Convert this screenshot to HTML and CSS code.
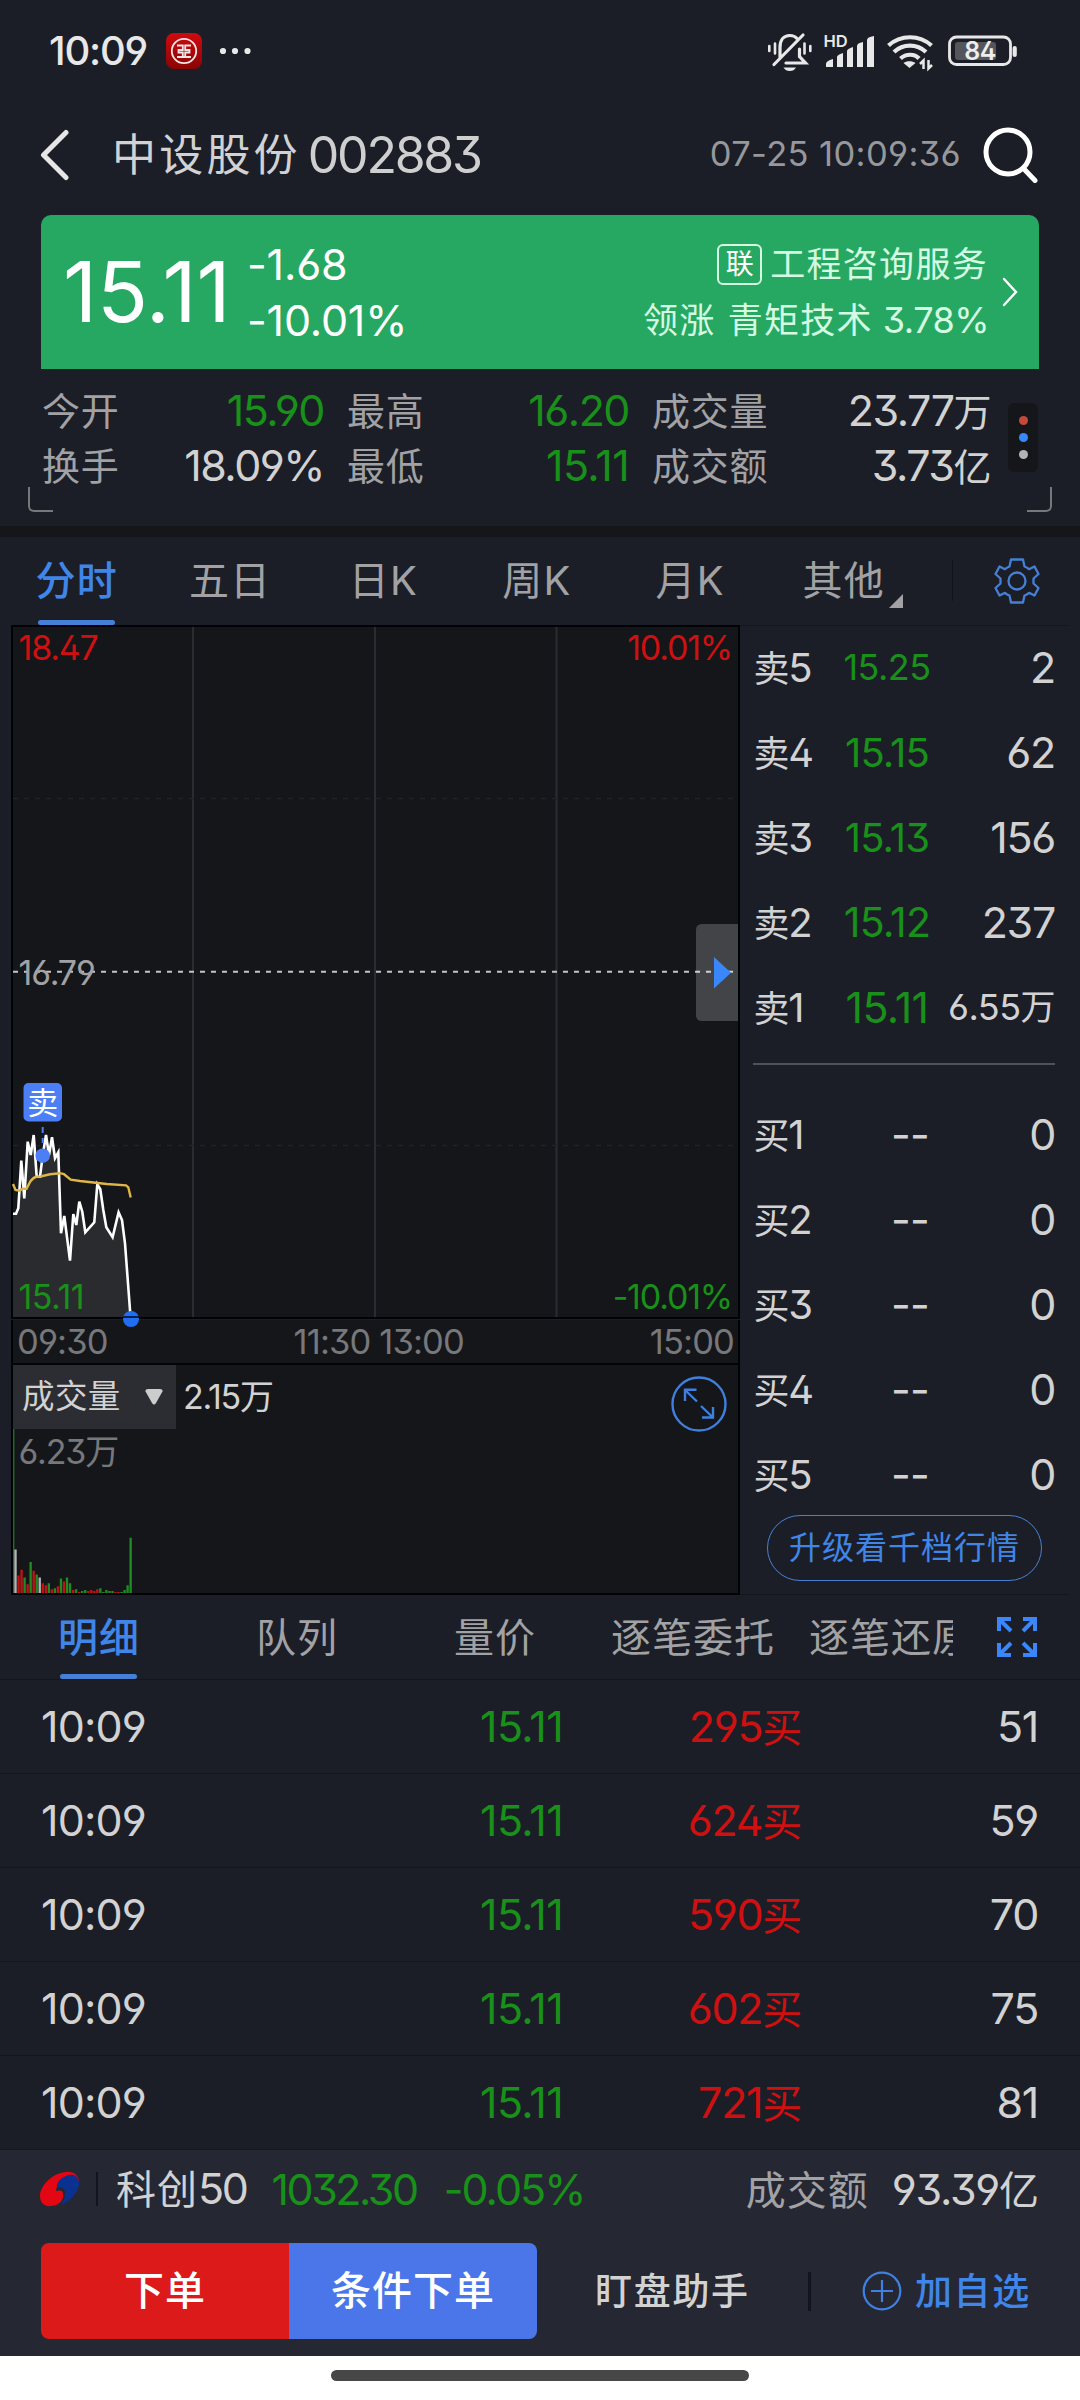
FILE: index.html
```html
<!DOCTYPE html>
<html lang="zh-CN">
<head>
<meta charset="utf-8">
<title>中设股份 002883</title>
<link rel="stylesheet" href="styles.css">
</head>
<body>
<div class="screen">

<header class="status">
  <span class="clock">10:09</span>
  <svg class="bank" viewBox="0 0 36 36"><defs><linearGradient id="bk" x1="0" y1="0" x2="0" y2="1"><stop offset="0" stop-color="#cf0a10"/><stop offset="1" stop-color="#8a0404"/></linearGradient></defs><rect width="36" height="36" rx="8" fill="url(#bk)"/><g fill="none" stroke="#f3e6e6" stroke-width="1.800"><circle cx="18" cy="18" r="12.200"/><path d="M11 12.500h5.800v4.500H12.500v2.500h4.300v4.500H11M25 12.500h-5.800v4.500h4.300v2.500h-4.300v4.500H25M15 24h6"/></g></svg>
  <svg class="dots" viewBox="0 0 32 8" fill="#e8e8e8"><circle cx="4" cy="4" r="3.100"/><circle cx="16" cy="4" r="3.100"/><circle cx="28.500" cy="4" r="3.100"/></svg>
  <svg class="sysicons" viewBox="765 30 255 44" fill="none" stroke="#e8e8e8" stroke-width="3.200">
    <g stroke-linecap="round"><path d="M780 57v-9.500c0-8 4-12 9.800-12 3 0 5.500 1 7.200 3M799.500 49v7.500l6 6.500H786M774 64.500L803 35"/><path d="M775 43.500v10M804.500 43.500v10" stroke-width="2.600"/><path d="M769.300 46v5M810.300 46v5" stroke-width="2.600"/></g>
    <path d="M783.500 67.500h12.500q-2 3.500-6.200 3.500t-6.300-3.500z" fill="#e8e8e8" stroke="none"/>
    <text class="hd" x="823.500" y="47.300" fill="#e8e8e8" stroke="none">HD</text>
    <path d="M826 67v-3q0-3 7-5v8zM837 67V57q0-2 6-4v14zM847 67V51q0-2 6-4v20zM857 67V46q0-3 6-4v25zM867 67V40q0-3 7-4v31z" fill="#e8e8e8" stroke="none"/>
    <path d="M888.500 45.500c12-11 31-11 43 0M894 52c9-8.500 23-8.500 32 0M900.500 58.500c5.500-5 14-5 18.500 0" stroke-width="4.200"/>
    <path d="M903.500 63c3-2.500 9-2.500 12 0l-6 5z" fill="#e8e8e8" stroke="none"/>
    <path d="M923.500 69v-8.500l-3.500 3.500M928.500 60v8.500l3.500-3.500" stroke-width="2.500"/>
    <rect x="949.500" y="37" width="61" height="27.500" rx="7" stroke-width="2.800"/>
    <path d="M1014.700 48v7" stroke-width="4.200" stroke-linecap="round"/>
    <rect x="955" y="42" width="41" height="18" rx="3" fill="#55565c" stroke="none"/>
    <text class="batt" x="980" y="60" text-anchor="middle" fill="#eee" stroke="none">84</text>
  </svg>
</header>

<nav class="titlebar">
  <svg class="back" viewBox="0 0 30 52" fill="none" stroke="#e6e6e6" stroke-width="5" stroke-linecap="round" stroke-linejoin="round"><path d="M26 3.500L3.500 26 26 48.500"/></svg>
  <h1><span class="name">中设股份</span><span class="code">002883</span></h1>
  <time>07-25 10:09:36</time>
  <svg class="search" viewBox="0 0 56 56" fill="none" stroke="#fff" stroke-width="5" stroke-linecap="round"><circle cx="25" cy="25" r="22"/><path d="M41 42l11 11.500"/></svg>
</nav>

<section class="quote">
  <strong>15.11</strong>
  <div class="change"><span>-1.68</span><span>-10.01%</span></div>
  <div class="sector">
    <div><b>联</b><span>工程咨询服务</span></div>
    <div><span>领涨</span><span class="lead">青矩技术</span><span class="num">3.78%</span></div>
  </div>
  <svg class="go" viewBox="0 0 16 30" fill="none" stroke="#fff" stroke-width="2.400" stroke-linecap="round"><path d="M2 2l12 13L2 28"/></svg>
</section>

<section class="stats">
  <dl>
    <dt>今开</dt><dd class="green">15.90</dd><dt>最高</dt><dd class="green">16.20</dd><dt>成交量</dt><dd>23.77<i>万</i></dd>
    <dt>换手</dt><dd>18.09%</dd><dt>最低</dt><dd class="green wide">15.11</dd><dt>成交额</dt><dd>3.73<i>亿</i></dd>
  </dl>
  <div class="more"><span></span><span></span><span></span></div>
  <span class="corner left"></span><span class="corner right"></span>
</section>

<nav class="periods">
  <span class="on">分时</span><span>五日</span><span>日K</span><span>周K</span><span>月K</span><span class="other">其他</span>
  <div class="settings"><svg viewBox="-24 -24 48 48" fill="none" stroke="#4580d6" stroke-width="2.300" stroke-linejoin="round"><circle r="8.500"/><path d="M-6-21.500H6L7.500-14.500Q10-13.500 12-11.800L17.500-14.500 21.500-7 16.500-2.500V2.500L21.500 7 17.500 14.500 12 11.800Q10 13.500 7.500 14.500L6 21.500H-6L-7.500 14.500Q-10 13.500-12 11.800L-17.500 14.500-21.500 7-16.500 2.500V-2.500L-21.500-7-17.500-14.500-12-11.800Q-10-13.500-7.500-14.500Z"/></svg></div>
</nav>

<main class="market">
  <div class="charts">
    <svg class="price" viewBox="11 625 729 695">
      <rect x="12" y="626" width="727" height="692" fill="#15161a" stroke="#020308" stroke-width="2"/>
      <path d="M193 627v690M375 627v690M556.500 627v690" stroke="#2b2c33" stroke-width="2"/>
      <path d="M13 798.500h725M13 1145.500h725" stroke="#212227" stroke-width="1.500" stroke-dasharray="5 6"/>
      <path d="M13 971.700h725" stroke="#c4c4c6" stroke-width="2" stroke-dasharray="5 6"/>
      <path d="M13 1213.700h3l2.300-5.400 3-47.600 3 37.600 3.400-56.600 3 13.300 3-20 3 41.700h3.300l2.700-21 3.300-20.700 3 20 3-17.700 3 21 3.300-6 2.700 81 3.300-17.300 5.700 44.700 3.300-46.700 3 11 3-23.300 3 10 3 20.600 9-10 3-38 3 5 3 20.700 3 17.300 6.300 10 6-25 3.400 7.700 3 23.300L130.300 1317H13z" fill="#2a2b2f"/>
      <path d="M13 1213.700h3l2.300-5.400 3-47.600 3 37.600 3.400-56.600 3 13.300 3-20 3 41.700h3.300l2.700-21 3.300-20.700 3 20 3-17.700 3 21 3.300-6 2.700 81 3.300-17.300 5.700 44.700 3.300-46.700 3 11 3-23.300 3 10 3 20.600 9-10 3-38 3 5 3 20.700 3 17.300 6.300 10 6-25 3.400 7.700 3 23.300L130.300 1314" fill="none" stroke="#fff" stroke-width="2.600"/>
      <path d="M13 1184l2.500 6 4 .7 3-2h4l4-7.500q3-4 6-4.500l4-.2 9.500-2.200 10-1.100 4 1 6.700 5.400 9.300 1.400 26.700 3 19.300 1.300 2.300 2 2.400 10.300" fill="none" stroke="#deb648" stroke-width="2.400"/>
      <path d="M42.700 1127v16" stroke="#4c82f0" stroke-width="2" stroke-dasharray="6 5"/>
      <circle cx="42.700" cy="1155.700" r="7.300" fill="#4c7ef5"/>
      <rect x="23.500" y="1083" width="38.500" height="38.500" rx="5" fill="#4c7ef5"/>
      <text class="mark" x="42.700" y="1113.500">卖</text>
      <text class="tick red" x="18.500" y="660">18.47</text>
      <text class="tick red end" x="732" y="660">10.01%</text>
      <text class="tick gray" x="18.500" y="984.500">16.79</text>
      <text class="tick green wide" x="18.500" y="1308.500">15.11</text>
      <text class="tick green end" x="732" y="1308.500">-10.01%</text>
      <path d="M738 924h-36q-6 0-6 6v85q0 6 6 6h36z" fill="#fff" fill-opacity=".2"/>
      <path d="M714 957v31.500l17-15.700z" fill="#3a86fb"/>
    </svg>
    <div class="axis"><span>09:30</span><span class="mid">11:30 13:00</span><span>15:00</span><i class="last"></i></div>
    <div class="volume">
      <div class="volhead"><div class="select">成交量<svg viewBox="0 0 18 16" fill="#ccc"><path d="M3 0h12q3 0 2.500 2.500L11 14q-2 3-4 0L.5 2.500Q0 0 3 0z"/></svg></div><span>2.15<i>万</i></span>
        <svg class="expand" viewBox="-28 -28 56 56" fill="none" stroke="#3f7fdd" stroke-width="2.400"><circle r="26.500"/><path d="M-2-2.500L-14-14M-2.500-14.200H-14V-3M2 2L14 13.500M14 3V13.500H3"/></svg></div>
      <svg class="bars" viewBox="13 1429 725 164">
        <path d="M13.700 1429v164" stroke="#1c721e" stroke-width="1.400"/>
        <g transform="translate(15.500 1593) scale(3.030 -.968)" stroke-width=".78">
          <path stroke="#b4b4b4" d="M0 0v45M8 0v16"/>
          <path stroke="#c01414" d="M1 0v18M2 0v24M4 0v9M6 0v23M9 0v10M10 0v8M12 0v4M14 0v7M16 0v12M19 0v3M21 0v1M24 0v2M25 0v3M26 0v2M27 0v4M33 0v1M34 0v1"/>
          <path stroke="#1f8c22" d="M3 0v16M5 0v32M7 0v19M11 0v10M13 0v5M15 0v15M17 0v16M18 0v10M20 0v4M22 0v2M23 0v3M28 0v5M29 0v1M30 0v3M31 0v2M32 0v2M35 0v1M36 0v3M37 0v8M38 0v57"/>
        </g>
        <text class="tick dim" x="18.500" y="1464">6.23<tspan class="wan">万</tspan></text>
      </svg>
    </div>
  </div>
  <aside class="book">
    <div class="side">
      <p><span>卖<i>5</i></span><em class="s1">15.25</em><b>2</b></p>
      <p><span>卖<i>4</i></span><em class="s2">15.15</em><b>62</b></p>
      <p><span>卖<i>3</i></span><em class="s2">15.13</em><b>156</b></p>
      <p><span>卖<i>2</i></span><em class="s3">15.12</em><b>237</b></p>
      <p><span>卖<i>1</i></span><em class="wide">15.11</em><b class="small">6.55<i>万</i></b></p>
    </div>
    <div class="side buy">
      <p><span>买<i>1</i></span><em>--</em><b>0</b></p>
      <p><span>买<i>2</i></span><em>--</em><b>0</b></p>
      <p><span>买<i>3</i></span><em>--</em><b>0</b></p>
      <p><span>买<i>4</i></span><em>--</em><b>0</b></p>
      <p><span>买<i>5</i></span><em>--</em><b>0</b></p>
    </div>
    <button class="upgrade">升级看千档行情</button>
  </aside>
</main>

<nav class="detailtabs">
  <div class="scroller"><span class="on">明细</span><span>队列</span><span>量价</span><span>逐笔委托</span><span>逐笔还原</span></div>
  <svg viewBox="0 0 40 40" fill="none" stroke="#3a86fb" stroke-width="4"><path d="M2 14V2h12M2 2l12 12M26 2h12v12M38 2L26 14M2 26v12h12M2 38l12-12M38 26v12H26M38 38L26 26"/></svg>
</nav>

<section class="trades">
  <p><time>10:09</time><span class="green wide">15.11</span><span class="red">295<i>买</i></span><b>51</b></p>
  <p><time>10:09</time><span class="green wide">15.11</span><span class="red">624<i>买</i></span><b>59</b></p>
  <p><time>10:09</time><span class="green wide">15.11</span><span class="red">590<i>买</i></span><b>70</b></p>
  <p><time>10:09</time><span class="green wide">15.11</span><span class="red">602<i>买</i></span><b>75</b></p>
  <p><time>10:09</time><span class="green wide">15.11</span><span class="red">721<i>买</i></span><b>81</b></p>
</section>

<footer class="bottom">
  <div class="index">
    <svg viewBox="0 0 40 36"><path d="M39 11C39 4 33 0 26 1 12 2 0 15 0 25c0 7 5 11 11 10 10-1 13-7 12-13-1-3-3-3-7-2 1-9 10-15 23-9z" fill="#e30613"/><path d="M39 11C38 4 32 2 26 5c-7 3-10 8-9 12 4-2 8 0 8 5 0 5-1 8-5 12C30 31 40 20 39 11z" fill="#0a3190"/></svg>
    <span class="iname"><i>科创</i>50</span><span class="green ival">1032.30</span><span class="green ichg">-0.05%</span>
    <span class="turn"><i>成交额</i></span><span class="tval">93.39<i>亿</i></span>
  </div>
  <div class="actions">
    <button class="order">下单</button><button class="cond">条件下单</button>
    <span class="helper">盯盘助手</span>
    <span class="add"><svg viewBox="-20 -20 40 40" fill="none" stroke="#4080e0" stroke-width="2.200"><circle r="18.300"/><path d="M-11 0H11M0-11V11"/></svg>加自选</span>
  </div>
</footer>
<div class="gesture"><span></span></div>

</div>
</body>
</html>
```
FILE: styles.css
```css
* { box-sizing: border-box; margin: 0; padding: 0; }
body { background: #1b1e27; }
i, em { font-style: normal; }
b, strong, h1 { font-weight: inherit; }
svg { display: block; flex: none; }
button { border: 0; background: none; color: inherit; font: inherit; letter-spacing: inherit; }

.screen {
  width: 1080px;
  height: 2400px;
  overflow: hidden;
  display: flex;
  flex-direction: column;
  background: #1b1e27;
  color: #d2d2d3;
  font-family: Inter, "Noto Sans CJK SC", sans-serif;
  font-size: 43px;
  font-weight: 400;
  letter-spacing: -.03em;
  line-height: 1;
  white-space: nowrap;
  font-feature-settings: "ss01", "cv03", "cv04", "cv09";
}
.green { color: #189019; fill: #189019; }
.red { color: #cf1010; fill: #cf1010; }

.status { height: 102px; display: flex; align-items: center; padding: 0 60px 0 49px; color: #e8e8e8; }
.clock { width: 117px; font-size: 40px; font-weight: 500; letter-spacing: -.03em; }
.bank { width: 36px; height: 36px; }
.dots { width: 32px; height: 8px; margin-left: 17px; }
.sysicons { width: 255px; height: 44px; margin-left: auto; margin-top: 2px; }
.hd { font-size: 16.5px; font-weight: 600; letter-spacing: 0; }
.batt { font-size: 25px; font-weight: 600; letter-spacing: -.02em; }

.titlebar { height: 113px; display: flex; align-items: center; padding: 0 41px 8px 40px; }
.back { width: 30px; height: 52px; }
h1 { display: flex; align-items: center; margin-left: 42px; font-size: 50px; letter-spacing: -.045em; }
.name { font-size: 44px; letter-spacing: 3.2px; margin-right: 7px; }
.code { color: #cfcfd0; }
.titlebar time { margin-left: auto; font-size: 34.5px; color: #97989b; letter-spacing: .011em; }
.search { width: 56px; height: 56px; margin-left: 22px; }

.quote {
  height: 154px;
  margin: 0 41px;
  display: flex;
  align-items: center;
  border-radius: 10px 10px 0 0;
  background: #27a862;
  color: #fff;
}
.quote strong { width: 206px; padding-left: 22px; font-size: 84px; letter-spacing: -.002em; }
.change { display: flex; flex-direction: column; gap: 13px; letter-spacing: -.004em; }
.sector { margin-left: auto; display: flex; flex-direction: column; gap: 14px; align-items: flex-end; color: #d3fce2; font-size: 35px; letter-spacing: 1.3px; }
.sector div { display: flex; align-items: center; height: 42px; }
.sector b { width: 45px; height: 41px; margin-right: 8px; border: 2px solid #d3fce2; border-radius: 6px; font-size: 28px; line-height: 37px; text-align: center; letter-spacing: 0; color: #fff; }
.lead { margin: 0 10px 0 12px; }
.sector .num { font-size: 36px; letter-spacing: -.015em; margin-right: -1px; }
.go { width: 16px; height: 30px; margin: 0 21px 0 14px; }

.stats { position: relative; height: 157px; padding: 14px 42px 0 42px; display: flex; }
.stats dl { width: 948px; display: grid; grid-template-columns: 75px 207px 98px 207px 138px 1fr; grid-auto-rows: 55px; align-items: center; }
.stats dt { font-size: 38px; letter-spacing: .8px; color: #a2a2a5; }
.stats dt:nth-of-type(3n+2), .stats dt:nth-of-type(3n) { padding-left: 23px; }
.stats dd { text-align: right; letter-spacing: -.035em; }
.stats dd i { font-size: 38px; }
.wide, .stats dd.wide { letter-spacing: -.015em; }
.more { width: 30px; height: 69px; margin: 20px 0 0 18px; padding: 13px 0; display: flex; flex-direction: column; justify-content: space-between; align-items: center; border-radius: 6px; background: #15161a; flex: none; }
.more span { width: 9px; height: 9px; border-radius: 50%; background: #b4b4b6; }
.more span:nth-child(1) { background: #c5493a; }
.more span:nth-child(2) { background: #3a86fb; }
.corner { position: absolute; top: 118px; width: 25px; height: 25px; border-bottom: 2.5px solid #77787b; }
.left { left: 28px; border-left: 2.5px solid #77787b; border-bottom-left-radius: 6px; }
.right { right: 28px; border-right: 2.5px solid #77787b; border-bottom-right-radius: 6px; }

.periods { height: 99px; border-top: 11px solid #15161a; display: flex; color: #a2a2a5; font-size: 40px; letter-spacing: 1.2px; }
.periods > span { width: 153.4px; height: 88px; text-align: center; line-height: 87px; }
.periods .on, .detailtabs .on { position: relative; color: #4085e8; font-weight: 500; }
.on::after { content: ""; position: absolute; left: 50%; bottom: 0; width: 77px; height: 5px; margin-left: -39px; border-radius: 3px; background: #4580d6; }
.other { position: relative; }
.other::after { content: ""; position: absolute; right: 17px; bottom: 17px; border: 7px solid; border-color: transparent #a2a2a5 #a2a2a5 transparent; }
.settings { width: 127px; height: 41px; margin: 23px 0 0 32px; border-left: 1px solid #111319; padding-left: 40px; display: flex; align-items: center; }
.settings svg { width: 48px; height: 48px; }

.market { height: 970px; display: flex; }
.charts { width: 729px; margin-left: 11px; flex: none; }
.price { width: 729px; height: 695px; position: relative; z-index: 0; }
.tick { font-size: 34px; letter-spacing: -.035em; }
.tick.wide { letter-spacing: -.015em; }
.end { text-anchor: end; }
.gray { fill: #a2a2a5; }
.dim { fill: #77787b; }
.wan { font-size: 34px; }
.mark { font-size: 31px; fill: #fff; text-anchor: middle; letter-spacing: 0; }
.axis { position: relative; height: 43px; padding: 1px 4px 0 4px; border: solid #020308; border-width: 0 2px; display: flex; align-items: center; justify-content: space-between; background: #15161a; font-size: 34.5px; letter-spacing: -.025em; color: #77787b; }
/* end-of-line marker that sits over the lower edge of the price chart */
.last { position: absolute; left: 110px; top: -9px; width: 16px; height: 16px; border-radius: 50%; background: linear-gradient(#1f6ff0 5px, #08204d 5px 7px, #1f6ff0 7px); z-index: 1; }
.volume { height: 232px; border: 2px solid #020308; background: #15161a; }
.volhead { height: 64px; display: flex; align-items: center; font-size: 34px; }
.select { width: 163px; height: 64px; margin-right: 7px; padding: 0 13px 0 9px; display: flex; align-items: center; justify-content: space-between; background: #2c2d32; font-size: 32.5px; letter-spacing: .4px; }
.select svg { width: 18px; height: 16px; }
.expand { width: 56px; height: 56px; margin: 14px 11px 0 auto; }
.bars { width: 725px; height: 164px; }

.book { flex: 1; height: 970px; margin-right: 11px; border: solid #14161c; border-width: 1px 0; padding-left: 13px; }
.side { width: 302px; height: 439px; border-bottom: 2px solid #50525a; }
.side.buy { border: 0; height: 450px; padding-top: 28px; }
.side p { height: 85px; display: grid; grid-template-columns: 61px 146px minmax(0, 1fr); line-height: 83px; }
.side span { font-size: 36px; padding-left: .5px; }
.side span i { font-size: 40px; }
.side em { color: #189019; text-align: center; letter-spacing: -.02em; }
.side em.wide { letter-spacing: -.015em; }
.side b { display: flex; justify-content: flex-end; }
.side .small, .side .s1 { font-size: 36px; letter-spacing: -.015em; }
.side .small i { font-size: 35px; }
.s2 { font-size: 40px; }
.s3 { font-size: 41px; }
.side.buy em { color: #d2d2d3; padding-left: 46px; }
.upgrade { width: 275px; height: 66px; margin-left: 14px; border: 1px solid #4a80d2; border-radius: 33px; color: #4085e8; font-size: 32px; letter-spacing: 1px; }

.detailtabs { height: 85px; display: flex; align-items: center; border-bottom: 1px solid #14161c; color: #a2a2a5; font-size: 40px; letter-spacing: 1px; }
.scroller { width: 953px; height: 84px; display: flex; overflow: hidden; }
.scroller span { flex: 0 0 198px; text-align: center; line-height: 86px; }
.detailtabs svg { width: 40px; height: 40px; margin-left: 44px; }

.trades { height: 470px; }
.trades p { height: 94px; display: grid; grid-template-columns: 390px 132px 238px 1fr; padding: 0 42px 0 41px; border-bottom: 1px solid #14161c; line-height: 92px; }
.trades time { letter-spacing: -.02em; }
.trades span, .trades b { text-align: right; }
.trades i { font-size: 40px; }

.bottom { height: 206px; background: #252733; }
.index { height: 78px; padding: 0 40px; display: flex; align-items: center; }
.index svg { width: 40px; height: 36px; }
.index i { font-size: 40px; letter-spacing: 1px; }
.iname { margin-left: 16px; padding-left: 18px; border-left: 2px solid #14151c; line-height: 33px; letter-spacing: -.055em; }
.ival { margin-left: 25px; letter-spacing: -.058em; }
.ichg { margin-left: 27px; letter-spacing: -.045em; }
.turn { margin-left: auto; margin-right: 23px; color: #a2a2a5; }
.actions { margin: 15px 41px 0; height: 96px; display: flex; align-items: center; font-weight: 500; font-size: 37px; letter-spacing: 1.7px; }
.actions button { width: 248px; height: 96px; color: #fff; font-size: 40px; letter-spacing: 1px; }
.order { background: #dc1a1a; border-radius: 8px 0 0 8px; }
.cond { background: #4a76ea; border-radius: 0 8px 8px 0; }
.helper { margin-left: 58px; }
.add { margin-left: auto; height: 39px; padding-left: 51px; padding-right: 8px; border-left: 3px solid #14151c; display: flex; align-items: center; gap: 13px; color: #4085e8; }
.add svg { width: 40px; height: 40px; }

.gesture { flex: 1; background: #fff; padding-top: 14px; }
.gesture span { display: block; width: 418px; height: 11px; margin: 0 auto; border-radius: 6px; background: #474747; }
```
